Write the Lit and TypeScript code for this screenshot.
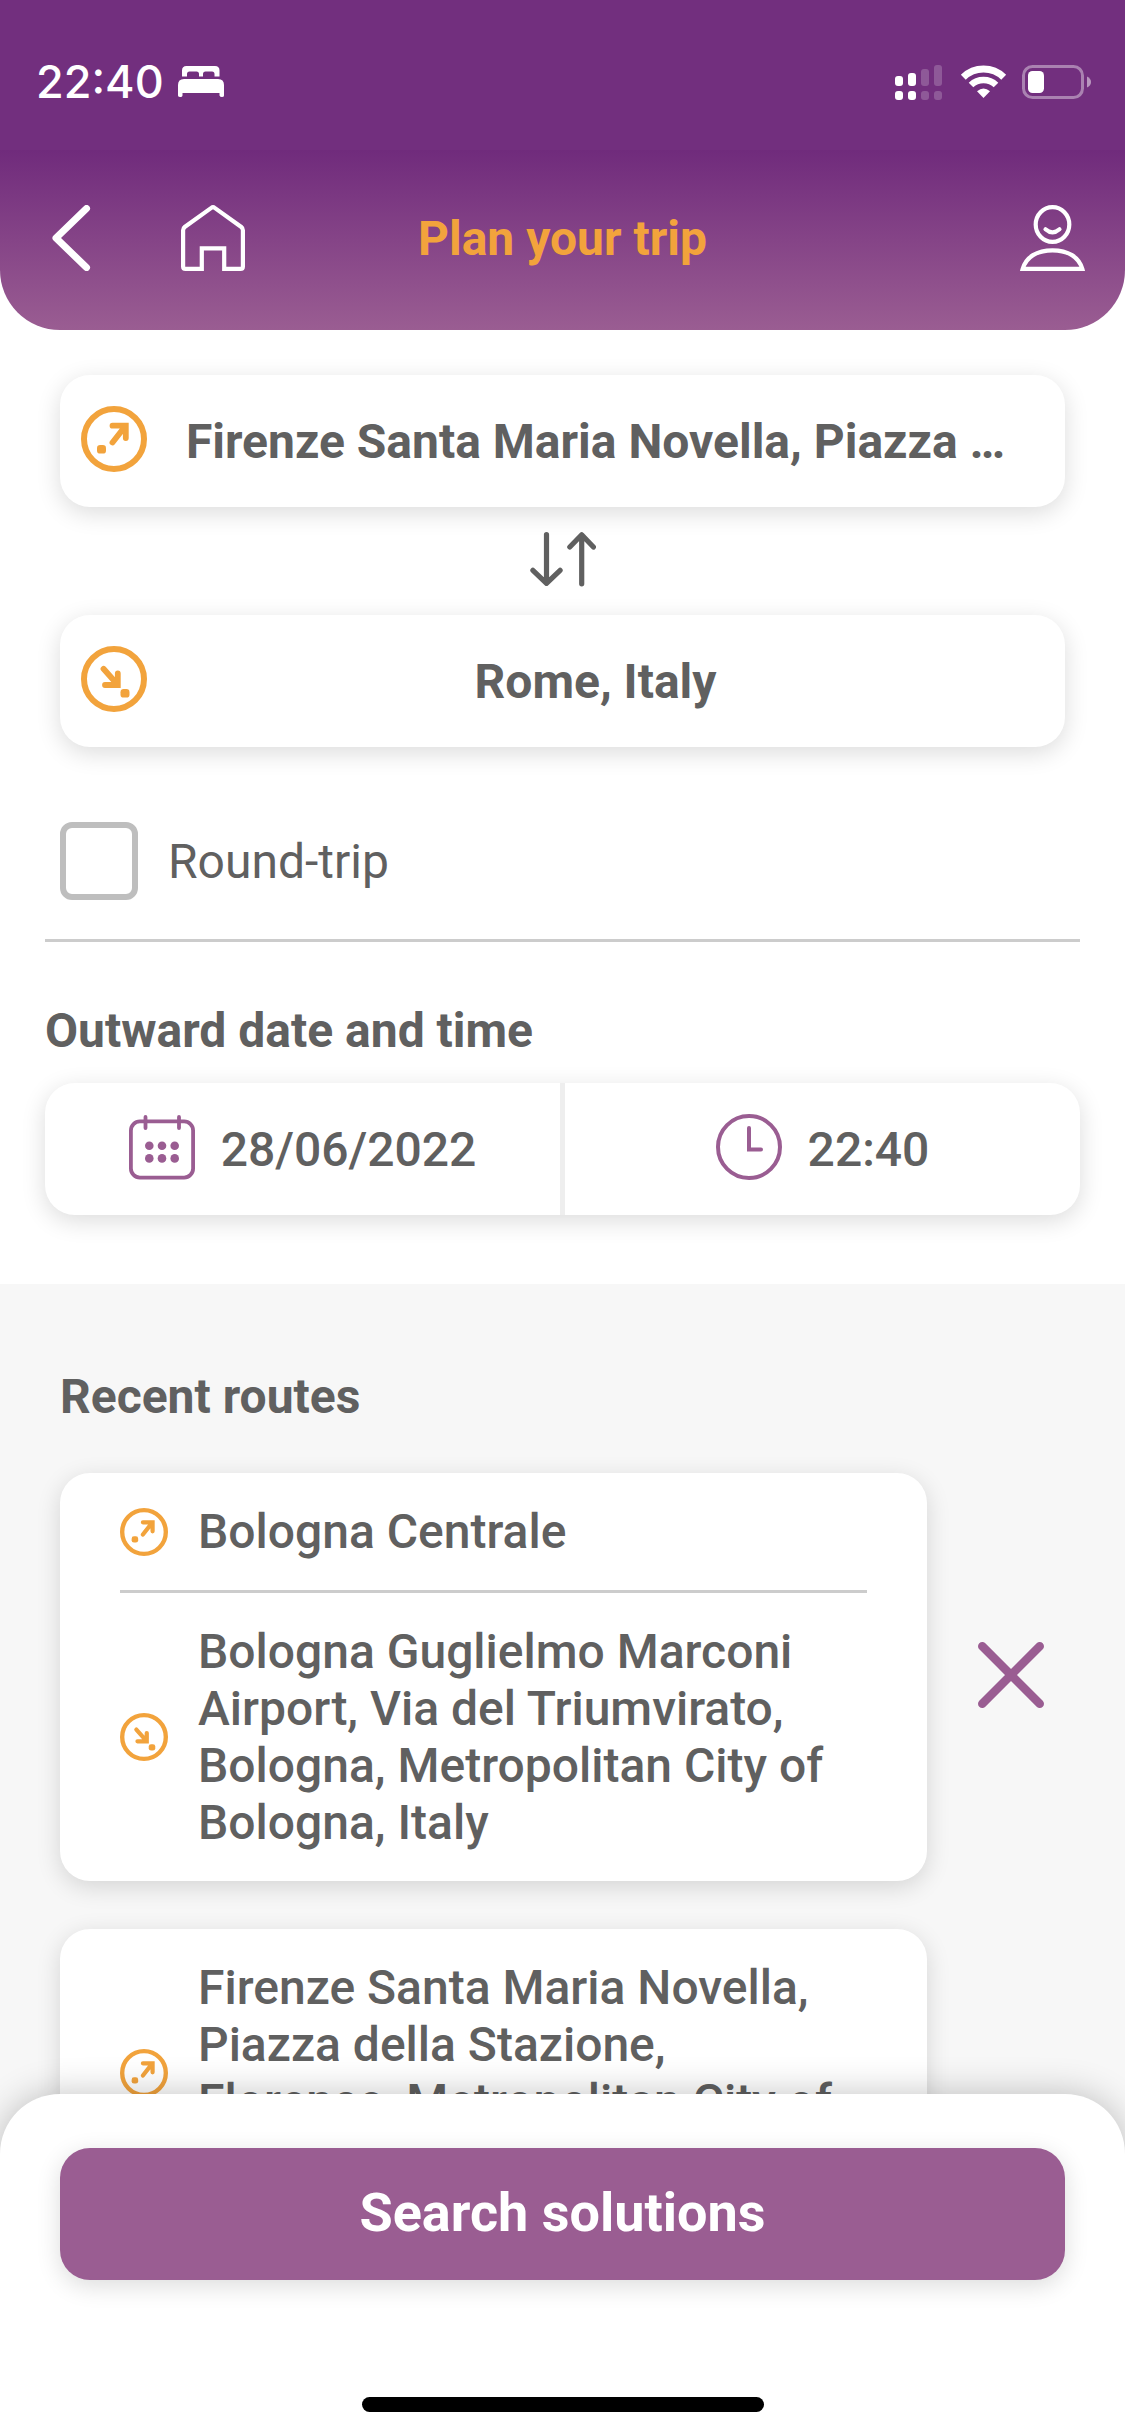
import { LitElement, html, css, svg } from "lit";
import { customElement, property, state } from "lit/decorators.js";

interface Route {
  id: number;
  from: string;
  to: string;
}

const departIcon = html`<svg class="pin" viewBox="0 0 66 66" aria-hidden="true">
  <circle cx="33" cy="33" r="30" fill="none" stroke="currentColor" stroke-width="6" />
  <path d="M31.5 19.7H44.8V32M44 20.5L31.5 36.500" fill="none" stroke="currentColor" stroke-width="5.800" stroke-linecap="round" stroke-linejoin="miter" />
  <rect x="16" y="39" width="9" height="8.600" rx="3.200" fill="currentColor" />
</svg>`;

const arriveIcon = html`<svg class="pin" viewBox="0 0 66 66" aria-hidden="true">
  <circle cx="33" cy="33" r="30" fill="none" stroke="currentColor" stroke-width="6" />
  <path d="M24 39H36.8V27.500M22.500 22.800L36 38" fill="none" stroke="currentColor" stroke-width="5.800" stroke-linecap="round" stroke-linejoin="miter" />
  <rect x="39.500" y="43" width="9" height="8.600" rx="3.200" fill="currentColor" />
</svg>`;

@customElement("route-card")
export class RouteCard extends LitElement {
  static styles = css`
    :host {
      display: flex;
      align-items: center;
      gap: 51px;
      padding-right: 81px;
    }
    .card {
      flex: 1;
      min-width: 0;
      padding: 0 60px;
      border: 0;
      border-radius: 30px;
      background: #fff;
      box-shadow: 0 6px 24px rgba(0, 0, 0, 0.14);
      color: inherit;
      font: inherit;
      text-align: left;
      cursor: pointer;
    }
    .stop {
      display: flex;
      align-items: center;
      gap: 30px;
      padding: 30px 0;
    }
    .stop + .stop {
      border-top: 3px solid #ccc;
    }
    .pin {
      flex: none;
      width: 48px;
      height: 48px;
      color: #f2a33c;
    }
    .remove {
      display: flex;
      flex: none;
      padding: 0;
      border: 0;
      background: none;
      color: #9a5d92;
      cursor: pointer;
    }
    .remove svg {
      width: 66px;
      height: 70px;
    }
  `;

  @property() from = "";
  @property() to = "";

  private remove() {
    this.dispatchEvent(new CustomEvent("remove-route"));
  }

  render() {
    return html`
      <button class="card" type="button">
        <span class="stop">${departIcon}<span>${this.from}</span></span>
        <span class="stop">${arriveIcon}<span>${this.to}</span></span>
      </button>
      <button class="remove" type="button" aria-label="Remove route" @click=${this.remove}>
        <svg viewBox="0 0 66 70" aria-hidden="true">
          <path d="M4.3 4.3L61.7 61.7M61.7 4.3L4.3 61.7" stroke="currentColor" stroke-width="8.6" stroke-linecap="round" />
        </svg>
      </button>
    `;
  }
}

@customElement("app-root")
export class AppRoot extends LitElement {
  static styles = css`
    :host {
      display: flex;
      flex-direction: column;
      height: 100vh;
      overflow: hidden;
      background: #fff;
      color: #606060;
      font: 500 48px/57px Roboto, "Liberation Sans", sans-serif;
    }
    * {
      box-sizing: border-box;
    }
    button {
      margin: 0;
      padding: 0;
      border: 0;
      background: none;
      color: inherit;
      font: inherit;
      cursor: pointer;
    }
    svg {
      display: block;
      flex: none;
    }
    h1,
    h2 {
      margin: 0;
      font-size: inherit;
      font-weight: 700;
    }
    .top {
      flex: none;
      overflow: hidden;
      border-radius: 0 0 60px 60px;
      color: #fff;
    }
    .status {
      display: flex;
      align-items: center;
      justify-content: space-between;
      padding: 52px 34px 38px 36px;
      background: #722f7e;
      font: 500 45px/60px Inter, "Liberation Sans", sans-serif;
    }
    .group {
      display: flex;
      align-items: center;
      gap: 14px;
    }
    .nav {
      display: grid;
      grid-template-columns: 1fr auto 1fr;
      align-items: center;
      padding: 55px 40px 59px;
      background: linear-gradient(#702b7c, #9a5d92);
    }
    .nav h1 {
      color: #f2a33c;
    }
    .links {
      display: flex;
      gap: 90px;
    }
    .links.end {
      justify-content: flex-end;
    }
    .scroll {
      flex: 1;
      min-height: 0;
      display: flex;
      flex-direction: column;
      overflow-y: auto;
      scrollbar-width: none;
    }
    .form {
      padding: 45px 45px 69px;
    }
    .places {
      display: flex;
      flex-direction: column;
      padding: 0 15px;
    }
    .field,
    .when {
      border-radius: 30px;
      background: #fff;
      box-shadow: 0 6px 24px rgba(0, 0, 0, 0.14);
    }
    .field {
      display: flex;
      align-items: center;
      gap: 33px;
      height: 132px;
      padding: 0 54px 4px 21px;
      font-weight: 700;
    }
    .field .pin {
      width: 66px;
      height: 66px;
      color: #f2a33c;
    }
    .field .name {
      flex: 1;
      min-width: 0;
      padding-top: 4px;
      overflow: hidden;
      text-align: center;
      text-overflow: ellipsis;
      white-space: nowrap;
    }
    .swap {
      display: flex;
      align-self: center;
      padding: 24px 0 28px;
    }
    .round {
      display: flex;
      align-items: center;
      gap: 30px;
      margin-top: 75px;
      padding: 0 15px 39px;
      border-bottom: 3px solid #ccc;
    }
    .box {
      appearance: none;
      flex: none;
      width: 78px;
      height: 78px;
      margin: 0;
      border: 6px solid #bebebe;
      border-radius: 12px;
      background: #fff;
    }
    .box:checked {
      background: #9a5d92;
    }
    .round label {
      font-weight: 400;
    }
    .form h2 {
      margin: 60px 0 24px;
    }
    .when {
      display: flex;
    }
    .when button {
      display: flex;
      flex: 1;
      align-items: center;
      justify-content: center;
      gap: 26px;
      height: 132px;
    }
    .when button + button {
      border-left: 5px solid #eee;
    }
    .when svg {
      color: #9a5d92;
    }
    .recent {
      flex: 1 0 auto;
      padding: 84px 0 100px 60px;
      background: #f7f7f7;
    }
    .list {
      display: flex;
      flex-direction: column;
      gap: 48px;
      margin: 48px 0 0;
    }
    .sheet {
      position: relative;
      display: flex;
      flex: none;
      flex-direction: column;
      align-items: center;
      margin-top: -60px;
      padding: 54px 60px 24px;
      border-radius: 60px 60px 0 0;
      background: #fff;
      box-shadow: 0 0 36px rgba(0, 0, 0, 0.24);
    }
    .search {
      width: 100%;
      height: 132px;
      padding-bottom: 4px;
      border-radius: 30px;
      background: #9a5d92;
      box-shadow: 0 6px 24px rgba(0, 0, 0, 0.14);
      color: #fff;
      font-size: 54px;
      font-weight: 700;
    }
    .handle {
      width: 40%;
      height: 15px;
      margin-top: 117px;
      border-radius: 8px;
      background: #000;
    }
  `;

  @state() private origin = "Firenze Santa Maria Novella, Piazza …";
  @state() private destination = "Rome, Italy";
  @state() private routes: Route[] = [
    {
      id: 1,
      from: "Bologna Centrale",
      to: "Bologna Guglielmo Marconi Airport, Via del Triumvirato, Bologna, Metropolitan City of Bologna, Italy",
    },
    {
      id: 2,
      from: "Firenze Santa Maria Novella, Piazza della Stazione, Florence, Metropolitan City of Florence, Italy",
      to: "Rome, Italy",
    },
  ];

  private swap() {
    [this.origin, this.destination] = [this.destination, this.origin];
  }

  private removeRoute(id: number) {
    this.routes = this.routes.filter((r) => r.id !== id);
  }

  private renderStatus() {
    return html`<div class="status">
      <div class="group">
        <span>22:40</span>
        <svg width="46" height="32" viewBox="0 0 46 32" fill="#fff" aria-hidden="true">
          <path d="M4 10.5V4.5Q4 0 8.5 0H37Q41.5 0 41.5 4.5V10.5H36.5V8Q36.5 5.5 34 5.5H27.5Q25 5.5 25 8V10.5H21V8Q21 5.5 18.5 5.5H11.5Q9 5.5 9 8V10.5Z" />
          <path d="M0 19Q0 13 6 13H40Q46 13 46 19V29.5Q46 31 44 31T41.5 29.5V27H4.5V29.5Q4.5 31 2.3 31T0 29.5Z" />
        </svg>
      </div>
      <div class="group">
        <svg width="47" height="36" viewBox="0 0 47 36" fill="#fff" aria-hidden="true">
          ${[12, 9, 5, 1].map(
            (y, i) => svg`<g opacity=${i < 2 ? 1 : 0.2}>
              <rect x=${i * 13} y=${y} width="8" height=${22 - y} rx="3" />
              <rect x=${i * 13} y="27" width="8" height="9" rx="3" />
            </g>`,
          )}
        </svg>
        <svg width="52" height="34" viewBox="-5 0 52 34" fill="none" stroke="#fff" aria-hidden="true">
          <path d="M2.3 12.2A29 29 0 0 1 42.7 12.2" stroke-width="7" />
          <path d="M10 20A18 18 0 0 1 35 20" stroke-width="6.6" />
          <path d="M16 26.3Q22.5 20.5 29 26.3L22.5 33Z" fill="#fff" stroke="none" />
        </svg>
        <svg width="69" height="34" viewBox="0 0 69 34" aria-hidden="true">
          <rect x="1.5" y="1.5" width="59" height="31" rx="9" fill="none" stroke="#fff" stroke-opacity="0.4" stroke-width="3" />
          <rect x="6" y="6" width="16" height="22" rx="4.5" fill="#fff" />
          <path d="M65 11.5Q69 13.5 69 17T65 22.5Z" fill="#fff" fill-opacity="0.5" />
        </svg>
      </div>
    </div>`;
  }

  private renderNav() {
    return html`<nav class="nav">
      <div class="links">
        <button type="button" aria-label="Back">
          <svg width="51" height="66" viewBox="-12 0 51 66" fill="none" stroke="#fff" stroke-width="7" stroke-linecap="round" stroke-linejoin="round" aria-hidden="true">
            <path d="M34.5 3.5L4 33L34.5 62.5" />
          </svg>
        </button>
        <button type="button" aria-label="Home">
          <svg width="64" height="66" viewBox="0 0 64 66" fill="none" stroke="#fff" stroke-width="4.2" aria-hidden="true">
            <path d="M30.3 2.9Q32 1.6 33.7 2.9L60.3 22Q61.9 23.3 61.9 25.2V61.5Q61.9 63.9 59.5 63.9H43.2V43.3H20.8V63.9H4.5Q2.1 63.9 2.1 61.5V25.2Q2.1 23.3 3.7 22Z" />
          </svg>
        </button>
      </div>
      <h1>Plan your trip</h1>
      <div class="links end">
        <button type="button" aria-label="Profile">
          <svg width="65" height="66" viewBox="0 0 65 66" fill="none" stroke="#fff" stroke-width="4.2" aria-hidden="true">
            <ellipse cx="32.5" cy="19.5" rx="16.8" ry="17.4" />
            <path d="M25.5 24.3Q32.5 30.5 39.5 24.3" stroke-linecap="round" />
            <path d="M2.7 63.9C6 52 17 45.3 32.5 45.3S59 52 62.3 63.9Z" />
          </svg>
        </button>
      </div>
    </nav>`;
  }

  render() {
    return html`
      <header class="top">${this.renderStatus()} ${this.renderNav()}</header>
      <main class="scroll">
        <section class="form">
          <div class="places">
            <button class="field" type="button">${departIcon}<span class="name">${this.origin}</span></button>
            <button class="swap" type="button" aria-label="Swap stops" @click=${this.swap}>
              <svg width="66" height="56" viewBox="0 0 66 56" fill="none" stroke="currentColor" stroke-width="5.2" stroke-linecap="round" stroke-linejoin="round" aria-hidden="true">
                <path d="M16.5 3.6V51.5M2.9 39.3L16.5 52.3L30.1 39.3" />
                <path d="M51.7 52.8V4.5M39.8 16L51.7 3.8L63.4 16" />
              </svg>
            </button>
            <button class="field" type="button">${arriveIcon}<span class="name">${this.destination}</span></button>
          </div>
          <div class="round">
            <input class="box" id="round-trip" type="checkbox" />
            <label for="round-trip">Round-trip</label>
          </div>
          <h2>Outward date and time</h2>
          <div class="when">
            <button type="button">
              <svg width="66" height="70" viewBox="0 0 66 70" fill="none" stroke="currentColor" stroke-width="3.8" aria-hidden="true">
                <rect x="1.9" y="7.4" width="62.2" height="56.2" rx="9" />
                <path d="M16.5 2.9V14M50 2.9V14" stroke-linecap="round" />
                <g fill="currentColor" stroke="none">
                  ${[31.7, 44.4].map((y) => [20.3, 33, 45.7].map((x) => svg`<circle cx=${x} cy=${y} r="4.3" />`))}
                </g>
              </svg>
              <span>28/06/2022</span>
            </button>
            <button type="button">
              <svg width="66" height="70" viewBox="0 0 66 70" fill="none" stroke="currentColor" stroke-width="4" aria-hidden="true">
                <circle cx="33" cy="33" r="31" />
                <path d="M33 14V35.5H45" stroke-linecap="round" />
              </svg>
              <span>22:40</span>
            </button>
          </div>
        </section>
        <section class="recent">
          <h2>Recent routes</h2>
          <div class="list">
            ${this.routes.map(
              (r) => html`<route-card .from=${r.from} .to=${r.to} @remove-route=${() => this.removeRoute(r.id)}></route-card>`,
            )}
          </div>
        </section>
      </main>
      <footer class="sheet">
        <button class="search" type="button">Search solutions</button>
        <div class="handle"></div>
      </footer>
    `;
  }
}
